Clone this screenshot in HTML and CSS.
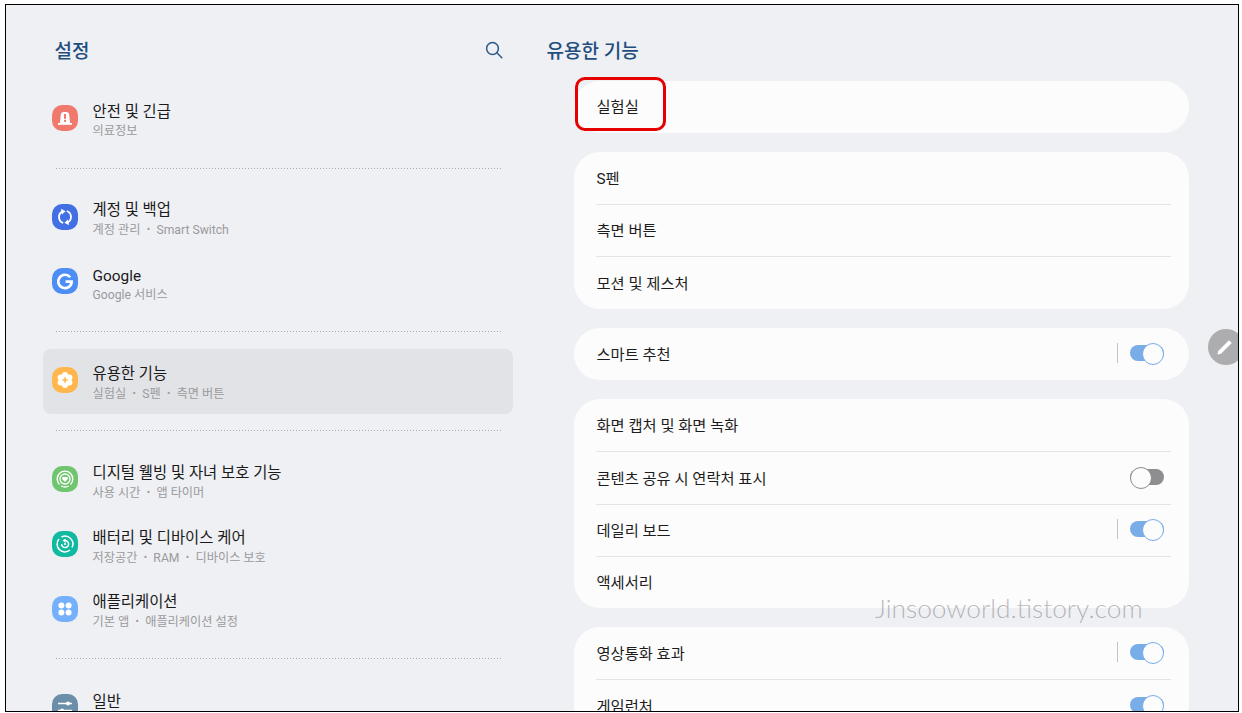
FILE: index.html
```html
<!DOCTYPE html>
<html lang="ko">
<head>
<meta charset="utf-8">
<title>설정</title>
<link rel="stylesheet" href="styles.css">
</head>
<body>
<div class="frame">
  <aside class="side">
    <header class="side-head">
      <h1 class="page-title">설정</h1>
      <svg class="search" viewBox="0 0 18 18" width="18" height="18"><circle cx="7.5" cy="7.5" r="5.9" fill="none" stroke="#2a5a88" stroke-width="1.5"/><path d="M11.8 11.8L16.8 16.8" stroke="#2a5a88" stroke-width="1.5" stroke-linecap="round"/></svg>
    </header>

    <div class="item">
      <svg class="ico" viewBox="0 0 26 26"><rect width="26" height="26" rx="10" fill="#f0786c"/><path d="M8 18L8.8 9.5Q9 7 11.3 7H14.7Q17 7 17.2 9.5L18 18Z" fill="#fff"/><rect x="6" y="18" width="14" height="1.8" fill="#fff"/><rect x="12" y="9" width="2" height="4.8" fill="#f0786c"/><rect x="12" y="14.8" width="2" height="2" fill="#f0786c"/></svg>
      <div class="txt"><div class="t">안전 및 긴급</div><div class="s">의료정보</div></div>
    </div>
    <div class="dots"></div>

    <div class="item">
      <svg class="ico" viewBox="0 0 26 26"><rect width="26" height="26" rx="10" fill="#4270e4"/><path d="M11.2 19A6.3 6.3 0 0 1 10.2 7.6" fill="none" stroke="#fff" stroke-width="1.8"/><path d="M9 4.8L13.6 7.2L10 10.4Z" fill="#fff"/><path d="M14.8 7A6.3 6.3 0 0 1 15.8 18.4" fill="none" stroke="#fff" stroke-width="1.8"/><path d="M17 21.2L12.4 18.8L16 15.6Z" fill="#fff"/></svg>
      <div class="txt"><div class="t">계정 및 백업</div><div class="s">계정 관리 <i>•</i> Smart Switch</div></div>
    </div>
    <div class="item">
      <svg class="ico" viewBox="0 0 26 26"><rect width="26" height="26" rx="10" fill="#4c8df6"/><path d="M18.2 9.2A6.7 6.7 0 1 0 19.7 13.6H13.6" fill="none" stroke="#fff" stroke-width="2.6"/></svg>
      <div class="txt"><div class="t">Google</div><div class="s">Google 서비스</div></div>
    </div>
    <div class="dots"></div>

    <div class="item active">
      <svg class="ico" viewBox="0 0 26 26"><rect width="26" height="26" rx="10" fill="#ffb74d"/><g fill="#fff"><circle cx="13" cy="8" r="3"/><circle cx="13" cy="18" r="3"/><circle cx="8.6" cy="10.5" r="3"/><circle cx="17.4" cy="10.5" r="3"/><circle cx="8.6" cy="15.5" r="3"/><circle cx="17.4" cy="15.5" r="3"/><circle cx="13" cy="13" r="4.5"/></g><path d="M13 10.2V15.8M10.2 13H15.8" stroke="#ffb74d" stroke-width="1.6"/></svg>
      <div class="txt"><div class="t">유용한 기능</div><div class="s">실험실 <i>•</i> S펜 <i>•</i> 측면 버튼</div></div>
    </div>
    <div class="dots"></div>

    <div class="item">
      <svg class="ico" viewBox="0 0 26 26"><rect width="26" height="26" rx="10" fill="#70c66e"/><path d="M7.5 18.5A7.8 7.8 0 1 1 18.5 18.5" fill="none" stroke="#fff" stroke-width="1.4"/><path d="M16.8 20A7.8 7.8 0 0 1 9.2 20" fill="none" stroke="#fff" stroke-width="1.4"/><circle cx="13" cy="13" r="5" fill="none" stroke="#fff" stroke-width="1.3"/><path d="M13 16L10.3 13.2A1.7 1.7 0 0 1 13 11.2A1.7 1.7 0 0 1 15.7 13.2Z" fill="#fff"/></svg>
      <div class="txt"><div class="t">디지털 웰빙 및 자녀 보호 기능</div><div class="s">사용 시간 <i>•</i> 앱 타이머</div></div>
    </div>
    <div class="item">
      <svg class="ico" viewBox="0 0 26 26"><rect width="26" height="26" rx="10" fill="#10b99f"/><path d="M18 19A7.8 7.8 0 0 1 7 8" fill="none" stroke="#fff" stroke-width="1.5"/><path d="M9.5 6A7.8 7.8 0 0 1 20 16.5" fill="none" stroke="#fff" stroke-width="1.5"/><path d="M9.6 13A3.5 3.5 0 1 0 13 9.6" fill="none" stroke="#fff" stroke-width="1.5"/><path d="M10.4 9.6L13.6 7.4V12Z" fill="#fff"/><circle cx="13" cy="13" r="1" fill="#fff"/></svg>
      <div class="txt"><div class="t">배터리 및 디바이스 케어</div><div class="s">저장공간 <i>•</i> RAM <i>•</i> 디바이스 보호</div></div>
    </div>
    <div class="item">
      <svg class="ico" viewBox="0 0 26 26"><rect width="26" height="26" rx="10" fill="#74b0fb"/><circle cx="9.4" cy="9.4" r="3" fill="#fff"/><circle cx="16.6" cy="9.4" r="3" fill="#fff"/><circle cx="9.4" cy="16.6" r="3" fill="#fff"/><circle cx="16.6" cy="16.6" r="3" fill="#fff"/></svg>
      <div class="txt"><div class="t">애플리케이션</div><div class="s">기본 앱 <i>•</i> 애플리케이션 설정</div></div>
    </div>
    <div class="dots"></div>

    <div class="item">
      <svg class="ico" viewBox="0 0 26 26"><rect width="26" height="26" rx="10" fill="#6b8fa8"/><path d="M6 9.5H20M6 16.5H20" stroke="#fff" stroke-width="1.5"/><circle cx="16" cy="9.5" r="2" fill="#fff"/><circle cx="10" cy="16.5" r="2" fill="#fff"/></svg>
      <div class="txt"><div class="t">일반</div><div class="s">&nbsp;</div></div>
    </div>
  </aside>

  <main class="main">
    <h2 class="page-title main-title">유용한 기능</h2>
    <div class="cards">
      <section class="card"><div class="row">실험실</div></section>
      <section class="card">
        <div class="row">S펜</div>
        <div class="row">측면 버튼</div>
        <div class="row">모션 및 제스처</div>
      </section>
      <section class="card">
        <div class="row">스마트 추천<span class="ctl"><span class="bar"></span><span class="tg on"></span></span></div>
      </section>
      <section class="card">
        <div class="row">화면 캡처 및 화면 녹화</div>
        <div class="row">콘텐츠 공유 시 연락처 표시<span class="ctl"><span class="tg off"></span></span></div>
        <div class="row">데일리 보드<span class="ctl"><span class="bar"></span><span class="tg on"></span></span></div>
        <div class="row">액세서리</div>
      </section>
      <section class="card">
        <div class="row">영상통화 효과<span class="ctl"><span class="bar"></span><span class="tg on"></span></span></div>
        <div class="row">게임런처<span class="ctl"><span class="tg on"></span></span></div>
      </section>
    </div>
  </main>

  <div class="highlight"></div>
  <div class="edit"><svg viewBox="0 0 20 20" width="20" height="20"><path d="M2.5 17.5L3.2 14L14 3.2L16.8 6L6 16.8Z" fill="#fff"/></svg></div>
  <div class="mark">Jinsooworld.tistory.com</div>
</div>
</body>
</html>
```
FILE: styles.css
```css
* { box-sizing: border-box; }
html, body { margin: 0; height: 713px; overflow: hidden; background: #fff; }
body { padding: 4px 3px 1px 5px; font-family: Roboto, "Noto Sans CJK KR", sans-serif; }
.frame {
  position: relative;
  display: flex;
  width: 1234px;
  height: 708px;
  border: 1.5px solid #000;
  background: #eff0f4;
  overflow: hidden;
}
.side { width: 508px; padding-left: 36.5px; flex: none; }
.side-head {
  display: flex;
  align-items: center;
  justify-content: space-between;
  height: 81.5px;
  padding: 19px 10px 9.5px 12px;
  width: 470px;
}
.page-title { margin: 0; font-size: 19px; font-weight: 500; line-height: 26px; color: #1f4e7e; }
.side-head .page-title { margin-top: 2px; }
.search { display: block; margin-bottom: 1px; }
.item {
  display: flex;
  align-items: center;
  gap: 15px;
  width: 470px;
  height: 64.8px;
  padding: 0 9px;
  border-radius: 8px;
}
.item.active { background: #e2e3e7; }
.ico { width: 26px; height: 26px; flex: none; display: block; margin-bottom: 2px; }
.txt { min-width: 0; margin-top: 4.6px; }
.t { font-size: 15.4px; line-height: 20px; color: #1a1a1a; white-space: nowrap; }
.s { font-size: 12.2px; line-height: 17px; margin-top: 1px; color: #9a9a9c; white-space: nowrap; }
.s i { font-style: normal; font-size: 10px; margin: 0 3.3px; vertical-align: 1px; }
.dots {
  width: 448px;
  height: 1px;
  margin: 16.4px 0 16.6px 12px;
  background-image: radial-gradient(circle, #a9aaad 0.6px, transparent 0.8px);
  background-size: 3px 1px;
}
.main { flex: 1; min-width: 0; padding: 0; }
.main-title { margin: 0 0 0 32.5px; padding-top: 34px; height: 75.5px; }
.cards { display: flex; flex-direction: column; gap: 19px; width: 615px; margin-left: 59.5px; }
.card { background: #fcfcfd; border-radius: 26px; padding: 0 18px 0 22px; flex: none; }
.row {
  display: flex;
  align-items: center;
  height: 52.3px;
  padding: 0 0 2.5px 1px;
  font-size: 15.3px;
  color: #1d1d1d;
  border-top: 1px solid #e4e4e6;
  white-space: nowrap;
}
.row:first-child { border-top: 0; }
.ctl { margin-left: auto; display: flex; align-items: center; margin-right: 7px; }
.bar { width: 1px; height: 20px; background: #c4c4c6; margin-right: 12px; }
.tg { position: relative; display: block; width: 34px; height: 16px; border-radius: 8px; }
.tg::after {
  content: "";
  position: absolute;
  top: -2px;
  width: 20px;
  height: 20px;
  border-radius: 50%;
  background: #fcfcfd;
}
.tg.on { background: #78ade8; }
.tg.on::after { right: 0; border: 1.2px solid #78ade8; }
.tg.off { background: #8e8e90; }
.tg.off::after { left: 0; border: 1.2px solid #8e8e90; }
.highlight {
  position: absolute;
  left: 568.5px;
  top: 71.5px;
  width: 91px;
  height: 54.5px;
  border: 3px solid #e60000;
  border-radius: 10px;
}
.edit {
  position: absolute;
  left: 1201.5px;
  top: 323.5px;
  width: 36px;
  height: 36px;
  border-radius: 50%;
  background: #adadb0;
  display: flex;
  align-items: center;
  justify-content: flex-start;
  padding-left: 7px;
}
.mark {
  position: absolute;
  left: 869px;
  top: 587px;
  font-family: Lato, sans-serif;
  font-weight: 300;
  font-size: 26.3px;
  line-height: 32px;
  letter-spacing: 0;
  color: rgba(90, 90, 90, 0.42);
  white-space: nowrap;
}
```
